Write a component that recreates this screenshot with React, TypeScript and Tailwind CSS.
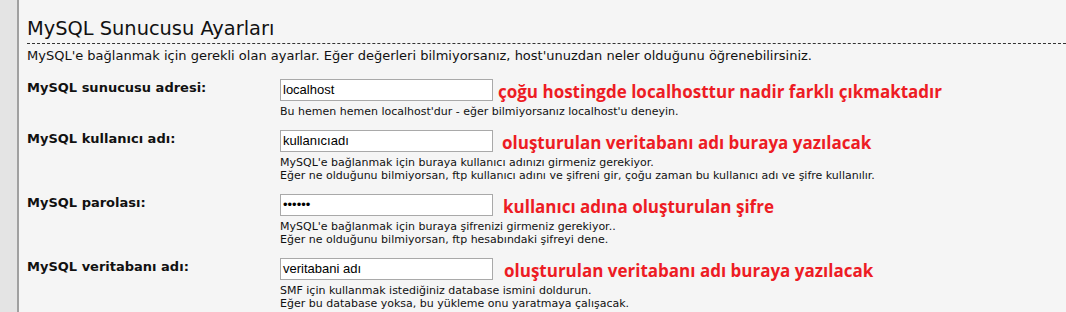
const rows = [
  {
    label: "MySQL sunucusu adresi:",
    value: "localhost",
    note: "çoğu hostingde localhosttur nadir farklı çıkmaktadır",
    gap: "ml-[5px]",
    hints: ["Bu hemen hemen localhost'dur - eğer bilmiyorsanız localhost'u deneyin."],
  },
  {
    label: "MySQL kullanıcı adı:",
    value: "kullanıcıadı",
    note: "oluşturulan veritabanı adı buraya yazılacak",
    gap: "ml-[9px]",
    hints: [
      "MySQL'e bağlanmak için buraya kullanıcı adınızı girmeniz gerekiyor.",
      "Eğer ne olduğunu bilmiyorsan, ftp kullanıcı adını ve şifreni gir, çoğu zaman bu kullanıcı adı ve şifre kullanılır.",
    ],
  },
  {
    label: "MySQL parolası:",
    value: "••••••",
    note: "kullanıcı adına oluşturulan şifre",
    gap: "ml-[10px]",
    hints: [
      "MySQL'e bağlanmak için buraya şifrenizi girmeniz gerekiyor..",
      "Eğer ne olduğunu bilmiyorsan, ftp hesabındaki şifreyi dene.",
    ],
  },
  {
    label: "MySQL veritabanı adı:",
    value: "veritabani adı",
    note: "oluşturulan veritabanı adı buraya yazılacak",
    gap: "ml-[11px]",
    hints: [
      "SMF için kullanmak istediğiniz database ismini doldurun.",
      "Eğer bu database yoksa, bu yükleme onu yaratmaya çalışacak.",
    ],
  },
];

export default function App() {
  return (
    <div className="flex h-[312px] w-[1066px] overflow-hidden bg-[#f5f5f5] text-[#111]" style={{ fontFamily: '"DejaVu Sans", Verdana, sans-serif' }}>
      <div className="w-[19px] shrink-0 border-r-2 border-[#a0a0a0] bg-[#e4e4e4]" />
      <div className="flex-1 pl-2">
        <h2 className="mt-[17px] pb-[2px] text-[19.4px] leading-[24px] text-[#111]">MySQL Sunucusu Ayarları</h2>
        <div className="border-t border-dashed border-[#333]" />
        <p className="mt-[2px] text-[13px] leading-[20px]">
          MySQL'e bağlanmak için gerekli olan ayarlar. Eğer değerleri bilmiyorsanız, host'unuzdan neler olduğunu öğrenebilirsiniz.
        </p>
        <div className="mt-[13px] flex flex-col">
          {rows.map((r, i) => (
            <div key={i} className="flex pb-[12px]">
              <div className="w-[253px] shrink-0 pt-[1px] text-[13px] font-bold leading-[16px]">{r.label}</div>
              <div className="flex flex-col">
                <div className="flex items-start">
                  <div
                    className="flex h-[22px] w-[213px] shrink-0 items-center border border-[#a9a9a9] bg-white px-[2px] text-[13px] text-black"
                    style={{ fontFamily: '"Liberation Sans", Arial, sans-serif' }}
                  >
                    {r.value}
                  </div>
                  <span
                    className={`${r.gap} whitespace-nowrap pt-[3px] text-[17px] font-bold leading-[19px] text-[#ed1c24]`}
                    style={{ fontFamily: '"Open Sans", sans-serif' }}
                  >
                    {r.note}
                  </span>
                </div>
                <div className="mt-[4px] whitespace-nowrap text-[11px] leading-[13px]">
                  {r.hints.map((h, j) => (
                    <div key={j}>{h}</div>
                  ))}
                </div>
              </div>
            </div>
          ))}
        </div>
      </div>
    </div>
  );
}
